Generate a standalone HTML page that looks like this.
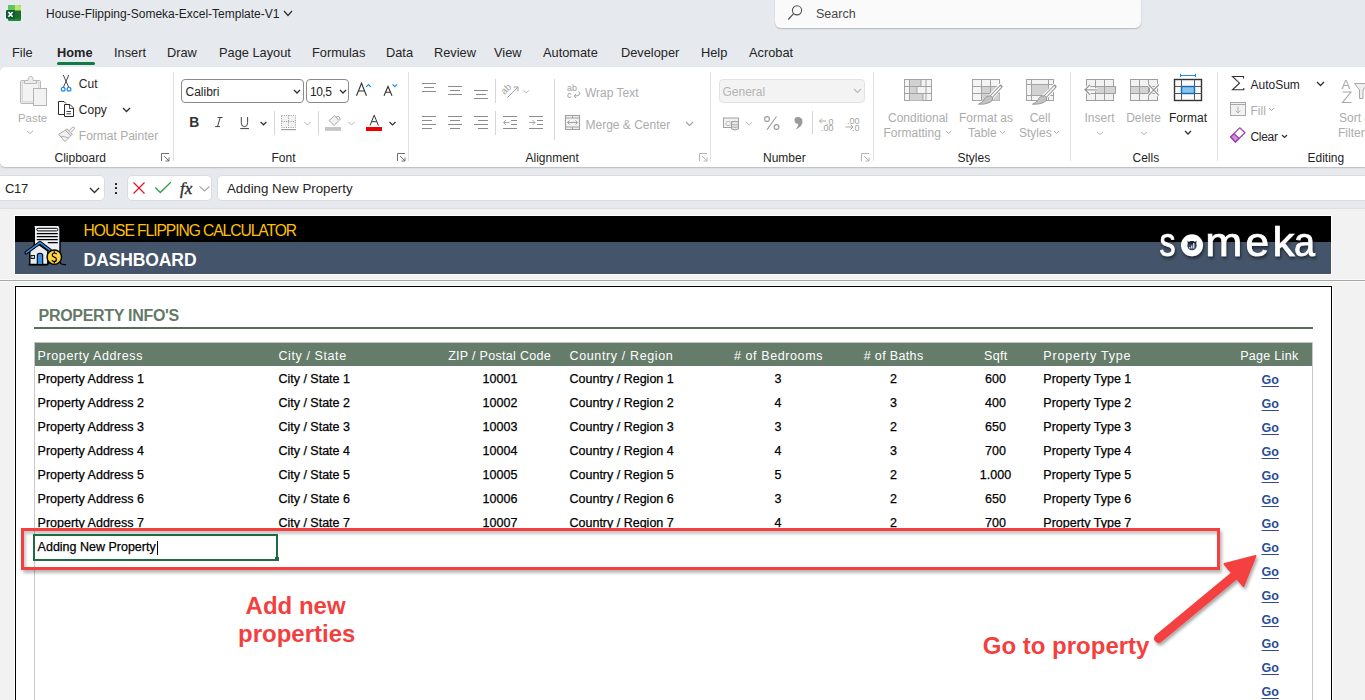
<!DOCTYPE html>
<html><head><meta charset="utf-8">
<style>
*{margin:0;padding:0;box-sizing:border-box}
html,body{width:1365px;height:700px;overflow:hidden;background:#f0f0f0;font-family:"Liberation Sans",sans-serif;color:#222;position:relative}
.t{position:absolute;white-space:nowrap;line-height:1}
.r{position:absolute}
svg.r{overflow:visible}
</style></head><body>
<div class="r" style="left:0px;top:0px;width:1365px;height:208px;background:#e6e9ed;"></div>
<div class="r" style="left:775px;top:-6px;width:366px;height:34px;background:#fafafa;border-radius:6px;box-shadow:0 1px 1.5px rgba(0,0,0,.22)"></div>
<svg class="r" style="left:786px;top:4px;" width="18" height="18" viewBox="0 0 18 18"><circle cx="11" cy="6.3" r="4.6" fill="none" stroke="#505050" stroke-width="1.1"/><path d="M7.6 9.6 L2.3 15.5" stroke="#505050" stroke-width="1.2"/></svg>
<div class="t" style="left:816px;top:8.42px;font-size:12.5px;font-weight:400;color:#474747;">Search</div>
<svg class="r" style="left:0px;top:0px;" width="24" height="24" viewBox="0 0 24 24"><rect x="8" y="5" width="13" height="16" rx="1.8" fill="#1f6b2a"/><path d="M8 10.5 V6.8 Q8 5 9.8 5 H14.5 V10.5 Z" fill="#5fc65b"/><path d="M14.5 5 H19.2 Q21 5 21 6.8 V10.5 H14.5 Z" fill="#b8e76b"/><path d="M8 18.5 H21 V19.2 Q21 21 19.2 21 H9.8 Q8 21 8 19.2 Z" fill="#1a8a3c"/><rect x="6" y="10" width="9" height="8.7" rx="1.3" fill="#0e5a31"/><path d="M8.4 12 L12.6 16.7 M12.6 12 L8.4 16.7" stroke="#fff" stroke-width="1.6"/></svg>
<div class="t" style="left:46px;top:7.84px;font-size:12px;font-weight:400;color:#1f1f1f;">House-Flipping-Someka-Excel-Template-V1</div>
<svg class="r" style="left:283px;top:10px;" width="10" height="7" viewBox="0 0 10 7"><path d="M1 1 L5.0 5.5 L9 1" fill="none" stroke="#303030" stroke-width="1.2"/></svg>
<div class="t" style="left:12px;top:47.16px;font-size:12.8px;font-weight:400;color:#242424;">File</div>
<div class="t" style="left:57px;top:47.16px;font-size:12.8px;font-weight:700;color:#242424;">Home</div>
<div class="t" style="left:114px;top:47.16px;font-size:12.8px;font-weight:400;color:#242424;">Insert</div>
<div class="t" style="left:167px;top:47.16px;font-size:12.8px;font-weight:400;color:#242424;">Draw</div>
<div class="t" style="left:219px;top:47.16px;font-size:12.8px;font-weight:400;color:#242424;">Page Layout</div>
<div class="t" style="left:312px;top:47.16px;font-size:12.8px;font-weight:400;color:#242424;">Formulas</div>
<div class="t" style="left:386px;top:47.16px;font-size:12.8px;font-weight:400;color:#242424;">Data</div>
<div class="t" style="left:434px;top:47.16px;font-size:12.8px;font-weight:400;color:#242424;">Review</div>
<div class="t" style="left:494px;top:47.16px;font-size:12.8px;font-weight:400;color:#242424;">View</div>
<div class="t" style="left:543px;top:47.16px;font-size:12.8px;font-weight:400;color:#242424;">Automate</div>
<div class="t" style="left:621px;top:47.16px;font-size:12.8px;font-weight:400;color:#242424;">Developer</div>
<div class="t" style="left:701px;top:47.16px;font-size:12.8px;font-weight:400;color:#242424;">Help</div>
<div class="t" style="left:749px;top:47.16px;font-size:12.8px;font-weight:400;color:#242424;">Acrobat</div>
<div class="r" style="left:57px;top:62px;width:38px;height:3px;background:#107c41;border-radius:2px"></div>
<div class="r" style="left:0px;top:67px;width:1365px;height:100px;background:#ffffff;border-radius:5px 0 0 5px;box-shadow:0 1px 1.5px rgba(0,0,0,.2)"></div>
<div class="r" style="left:173px;top:72px;width:1px;height:89px;background:#e1e1e1;"></div>
<div class="r" style="left:408px;top:72px;width:1px;height:89px;background:#e1e1e1;"></div>
<div class="r" style="left:710px;top:72px;width:1px;height:89px;background:#e1e1e1;"></div>
<div class="r" style="left:873px;top:72px;width:1px;height:89px;background:#e1e1e1;"></div>
<div class="r" style="left:1070px;top:72px;width:1px;height:89px;background:#e1e1e1;"></div>
<div class="r" style="left:1217px;top:72px;width:1px;height:89px;background:#e1e1e1;"></div>
<div class="t" style="left:54.5px;top:151.84px;font-size:12px;font-weight:400;color:#242424;">Clipboard</div>
<div class="t" style="left:271.5px;top:151.84px;font-size:12px;font-weight:400;color:#242424;">Font</div>
<div class="t" style="left:525.5px;top:151.84px;font-size:12px;font-weight:400;color:#242424;">Alignment</div>
<div class="t" style="left:763px;top:151.84px;font-size:12px;font-weight:400;color:#242424;">Number</div>
<div class="t" style="left:957.5px;top:151.84px;font-size:12px;font-weight:400;color:#242424;">Styles</div>
<div class="t" style="left:1132.5px;top:151.84px;font-size:12px;font-weight:400;color:#242424;">Cells</div>
<div class="t" style="left:1307.5px;top:151.84px;font-size:12px;font-weight:400;color:#242424;">Editing</div>
<svg class="r" style="left:161px;top:153px;" width="9" height="9" viewBox="0 0 9 9"><path d="M0.5 8 V0.5 H8" fill="none" stroke="#6e6e6e" stroke-width="1"/><path d="M3 3 L8 8 M8 4.5 V8 H4.5" fill="none" stroke="#6e6e6e" stroke-width="1"/></svg>
<svg class="r" style="left:397px;top:153px;" width="9" height="9" viewBox="0 0 9 9"><path d="M0.5 8 V0.5 H8" fill="none" stroke="#6e6e6e" stroke-width="1"/><path d="M3 3 L8 8 M8 4.5 V8 H4.5" fill="none" stroke="#6e6e6e" stroke-width="1"/></svg>
<svg class="r" style="left:699px;top:153px;" width="9" height="9" viewBox="0 0 9 9"><path d="M0.5 8 V0.5 H8" fill="none" stroke="#b4b4b4" stroke-width="1"/><path d="M3 3 L8 8 M8 4.5 V8 H4.5" fill="none" stroke="#b4b4b4" stroke-width="1"/></svg>
<svg class="r" style="left:861px;top:153px;" width="9" height="9" viewBox="0 0 9 9"><path d="M0.5 8 V0.5 H8" fill="none" stroke="#b4b4b4" stroke-width="1"/><path d="M3 3 L8 8 M8 4.5 V8 H4.5" fill="none" stroke="#b4b4b4" stroke-width="1"/></svg>
<div class="t" style="left:18px;top:112.85px;font-size:11.4px;font-weight:400;color:#acacac;">Paste</div>
<svg class="r" style="left:26px;top:130px;" width="8" height="5" viewBox="0 0 8 5"><path d="M1 1 L4.0 3.5 L7 1" fill="none" stroke="#b0b0b0" stroke-width="1"/></svg>
<div class="t" style="left:78.8px;top:77.84px;font-size:12px;font-weight:400;color:#242424;">Cut</div>
<div class="t" style="left:78.8px;top:104.34px;font-size:12px;font-weight:400;color:#242424;">Copy</div>
<svg class="r" style="left:121.5px;top:106.5px;" width="9" height="6" viewBox="0 0 9 6"><path d="M1 1 L4.5 4.5 L8 1" fill="none" stroke="#303030" stroke-width="1.3"/></svg>
<div class="t" style="left:78.8px;top:130.34px;font-size:12px;font-weight:400;color:#acacac;">Format Painter</div>
<div class="r" style="left:181px;top:79px;width:123px;height:24px;background:#fff;border:1px solid #8a8a8a;border-radius:4px"></div>
<div class="t" style="left:185.5px;top:86.34px;font-size:12px;font-weight:400;color:#242424;">Calibri</div>
<svg class="r" style="left:292.5px;top:88.5px;" width="8" height="5.5" viewBox="0 0 8 5.5"><path d="M1 1 L4.0 4.0 L7 1" fill="none" stroke="#303030" stroke-width="1.3"/></svg>
<div class="r" style="left:306px;top:79px;width:43px;height:24px;background:#fff;border:1px solid #8a8a8a;border-radius:4px"></div>
<div class="t" style="left:310px;top:86.34px;font-size:12px;font-weight:400;color:#242424;letter-spacing:-0.5px;">10,5</div>
<svg class="r" style="left:338.5px;top:88.5px;" width="8" height="5.5" viewBox="0 0 8 5.5"><path d="M1 1 L4.0 4.0 L7 1" fill="none" stroke="#303030" stroke-width="1.3"/></svg>
<div class="t" style="left:585px;top:86.84px;font-size:12px;font-weight:400;color:#acacac;">Wrap Text</div>
<div class="t" style="left:585.5px;top:118.84px;font-size:12px;font-weight:400;color:#acacac;">Merge &amp; Center</div>
<svg class="r" style="left:685px;top:121px;" width="9" height="6" viewBox="0 0 9 6"><path d="M1 1 L4.5 4.5 L8 1" fill="none" stroke="#a0a0a0" stroke-width="1.1"/></svg>
<div class="r" style="left:719px;top:79px;width:146px;height:24px;background:#f3f3f3;border:1px solid #e3e3e3;border-radius:4px"></div>
<div class="t" style="left:722.5px;top:86.34px;font-size:12px;font-weight:400;color:#b4b4b4;">General</div>
<svg class="r" style="left:853px;top:88px;" width="9" height="6" viewBox="0 0 9 6"><path d="M1 1 L4.5 4.5 L8 1" fill="none" stroke="#b8b8b8" stroke-width="1.1"/></svg>
<div class="t" style="left:718px;width:400px;text-align:center;top:112.34px;font-size:12px;font-weight:400;color:#acacac;">Conditional</div>
<div class="t" style="left:883.5px;top:127.14px;font-size:12px;font-weight:400;color:#acacac;">Formatting</div>
<div class="t" style="left:786px;width:400px;text-align:center;top:112.34px;font-size:12px;font-weight:400;color:#acacac;">Format as</div>
<div class="t" style="left:968px;top:127.14px;font-size:12px;font-weight:400;color:#acacac;">Table</div>
<div class="t" style="left:840px;width:400px;text-align:center;top:112.34px;font-size:12px;font-weight:400;color:#acacac;">Cell</div>
<div class="t" style="left:1019px;top:127.14px;font-size:12px;font-weight:400;color:#acacac;">Styles</div>
<svg class="r" style="left:945px;top:130px;" width="7" height="5" viewBox="0 0 7 5"><path d="M1 1 L3.5 3.5 L6 1" fill="none" stroke="#b0b0b0" stroke-width="1"/></svg>
<svg class="r" style="left:998.5px;top:130px;" width="7" height="5" viewBox="0 0 7 5"><path d="M1 1 L3.5 3.5 L6 1" fill="none" stroke="#b0b0b0" stroke-width="1"/></svg>
<svg class="r" style="left:1052.5px;top:130px;" width="7" height="5" viewBox="0 0 7 5"><path d="M1 1 L3.5 3.5 L6 1" fill="none" stroke="#b0b0b0" stroke-width="1"/></svg>
<div class="t" style="left:899.5px;width:400px;text-align:center;top:112.34px;font-size:12px;font-weight:400;color:#acacac;">Insert</div>
<div class="t" style="left:943.5px;width:400px;text-align:center;top:112.34px;font-size:12px;font-weight:400;color:#acacac;">Delete</div>
<div class="t" style="left:988px;width:400px;text-align:center;top:112.34px;font-size:12px;font-weight:400;color:#242424;">Format</div>
<svg class="r" style="left:1095.5px;top:131px;" width="8" height="5" viewBox="0 0 8 5"><path d="M1 1 L4.0 3.5 L7 1" fill="none" stroke="#b0b0b0" stroke-width="1"/></svg>
<svg class="r" style="left:1140px;top:131px;" width="8" height="5" viewBox="0 0 8 5"><path d="M1 1 L4.0 3.5 L7 1" fill="none" stroke="#b0b0b0" stroke-width="1"/></svg>
<svg class="r" style="left:1184px;top:129.5px;" width="8" height="5.5" viewBox="0 0 8 5.5"><path d="M1 1 L4.0 4.0 L7 1" fill="none" stroke="#303030" stroke-width="1.3"/></svg>
<div class="t" style="left:1250.5px;top:79.34px;font-size:12px;font-weight:400;color:#242424;">AutoSum</div>
<svg class="r" style="left:1315.5px;top:81px;" width="9" height="6" viewBox="0 0 9 6"><path d="M1 1 L4.5 4.5 L8 1" fill="none" stroke="#303030" stroke-width="1.3"/></svg>
<div class="t" style="left:1250.5px;top:105.34px;font-size:12px;font-weight:400;color:#acacac;">Fill</div>
<svg class="r" style="left:1268px;top:107px;" width="7" height="5" viewBox="0 0 7 5"><path d="M1 1 L3.5 3.5 L6 1" fill="none" stroke="#b0b0b0" stroke-width="1"/></svg>
<div class="t" style="left:1250.5px;top:130.84px;font-size:12px;font-weight:400;color:#242424;letter-spacing:-0.3px;">Clear</div>
<svg class="r" style="left:1281px;top:133.5px;" width="7" height="5" viewBox="0 0 7 5"><path d="M1 1 L3.5 3.5 L6 1" fill="none" stroke="#303030" stroke-width="1.2"/></svg>
<div class="t" style="left:1339px;top:111.84px;font-size:12px;font-weight:400;color:#acacac;">Sort &amp;</div>
<div class="t" style="left:1338px;top:127.34px;font-size:12px;font-weight:400;color:#acacac;">Filter</div>
<div class="r" style="left:-5px;top:175px;width:110px;height:26px;background:#fff;border:1px solid #dcdcdc;border-radius:5px"></div>
<div class="t" style="left:5px;top:182.00px;font-size:13px;font-weight:400;color:#242424;letter-spacing:-0.3px;">C17</div>
<svg class="r" style="left:89px;top:187px;" width="11" height="7" viewBox="0 0 11 7"><path d="M1 1 L5.5 5.5 L10 1" fill="none" stroke="#303030" stroke-width="1.3"/></svg>
<div class="r" style="left:115px;top:182.8px;width:2px;height:2px;background:#1a1a1a;border-radius:0.5px"></div>
<div class="r" style="left:115px;top:187.3px;width:2px;height:2px;background:#1a1a1a;border-radius:0.5px"></div>
<div class="r" style="left:115px;top:191.6px;width:2px;height:2px;background:#1a1a1a;border-radius:0.5px"></div>
<div class="r" style="left:126.5px;top:175px;width:85px;height:26px;background:#fff;border:1px solid #dcdcdc;border-radius:5px"></div>
<div class="r" style="left:216.5px;top:175px;width:1160px;height:26px;background:#fff;border:1px solid #dcdcdc;border-radius:5px"></div>
<div class="t" style="left:227px;top:181.74px;font-size:13.3px;font-weight:400;color:#242424;">Adding New Property</div>
<svg style="position:absolute;left:0;top:0;overflow:visible" width="1365" height="700" viewBox="0 0 1365 700"><rect x="20.5" y="80.5" width="20" height="23" rx="1.2" fill="#e9e9e9" stroke="#b9b9b9" stroke-width="1"/><rect x="22.5" y="82.5" width="16" height="19" fill="#f3f3f3" stroke="#d6d6d6" stroke-width="0.8"/><path d="M24.5 83.5 V80.5 H28 Q28 76.3 30.6 76.3 Q33.2 76.3 33.2 80.5 H36.5 V83.5 Z" fill="#ececec" stroke="#b9b9b9" stroke-width="1"/><rect x="33.5" y="88.5" width="13" height="17" fill="#f2f2f2" stroke="#b3b3b3" stroke-width="1"/><path d="M63.3 75 L68.8 87.5 M68.8 75 L63.3 87.5" stroke="#333" stroke-width="0.9" fill="none"/><circle cx="63.2" cy="89.3" r="1.9" fill="none" stroke="#1e88e5" stroke-width="1.2"/><circle cx="69" cy="89.3" r="1.9" fill="none" stroke="#1e88e5" stroke-width="1.2"/><path d="M64.5 114.5 H58.5 V101.5 H64 L66 103.5" fill="none" stroke="#2b2b2b" stroke-width="1"/><path d="M64.5 104.5 H70 L73.5 108 V116.5 H64.5 Z" fill="#fff" stroke="#2b2b2b" stroke-width="1"/><path d="M69.5 104.5 V108.5 H73.5" fill="none" stroke="#2b2b2b" stroke-width="0.9"/><path d="M66.5 111.5 H71 M66.5 113.8 H71" stroke="#2b2b2b" stroke-width="0.9"/><path d="M65.3 130.2 L58.6 134.3 L65 141.6 L70.8 135.7 Z" fill="#f1f1f1" stroke="#a9a9a9" stroke-width="1" stroke-linejoin="round"/><path d="M60.3 136.2 Q64.5 136.3 68.6 137.9" fill="none" stroke="#a9a9a9" stroke-width="0.9"/><path d="M65.3 130.2 L66.8 128.7 L72.3 134.2 L70.8 135.7 Z" fill="#e6e6e6" stroke="#a9a9a9" stroke-width="1" stroke-linejoin="round"/><path d="M68.9 130.8 L72.2 127.6 Q73.4 126.6 74.2 127.5 Q75 128.5 73.9 129.5 L70.6 132.5" fill="#f4f4f4" stroke="#a9a9a9" stroke-width="1"/><text x="189.3" y="127" font-family="Liberation Sans" font-weight="700" font-size="13.8" fill="#333">B</text><path d="M217.6 117.5 H222.6 M215.2 126.6 H220 M220.2 117.5 L217.5 126.6" stroke="#444" stroke-width="1" fill="none"/><path d="M241.3 117 V122.8 Q241.3 126.7 244.5 126.7 Q247.6 126.7 247.6 122.8 V117" fill="none" stroke="#444" stroke-width="1"/><path d="M240.2 128.6 H249" stroke="#444" stroke-width="1"/><path d="M260.6 122 L263.5 124.8 L266.4 122" fill="none" stroke="#333" stroke-width="1.2"/><line x1="274.5" y1="111" x2="274.5" y2="135" stroke="#d6d6d6"/><line x1="318.5" y1="111" x2="318.5" y2="135" stroke="#d6d6d6"/><rect x="281.5" y="115.5" width="14" height="12" fill="#f2f2f2" stroke="#9a9a9a" stroke-width="1" stroke-dasharray="1 1.3"/><path d="M288.5 115.5 V127.5 M281.5 121.5 H295.5" stroke="#9a9a9a" stroke-width="1" stroke-dasharray="1 1.3"/><rect x="281" y="129" width="15" height="1.2" fill="#a0a0a0"/><path d="M304.5 122 L307.5 125 L310.5 122" fill="none" stroke="#b5b5b5" stroke-width="1"/><path d="M329 120.5 L334.5 115.5 L339 120.5 L334 125.5 Z" fill="#f0f0f0" stroke="#a8a8a8" stroke-width="1"/><path d="M336 117 Q340 115 340 120" fill="none" stroke="#a8a8a8" stroke-width="1"/><rect x="325" y="127" width="16" height="3.8" fill="#c4c4c4"/><path d="M348.5 122 L351.5 125 L354.5 122" fill="none" stroke="#b5b5b5" stroke-width="1"/><path d="M370 125.5 L374.2 115.2 L378.4 125.5 M371.6 121.7 H376.8" fill="none" stroke="#333" stroke-width="1"/><rect x="366" y="127" width="16" height="4" fill="#ee0000"/><path d="M389.5 122 L392.5 125 L395.5 122" fill="none" stroke="#333" stroke-width="1.2"/><path d="M356.5 95.8 L361.5 83.3 L366.5 95.8 M358.4 91 H364.6" fill="none" stroke="#333" stroke-width="1.1"/><path d="M366.2 86.8 L368.5 84.5 L370.8 86.8" fill="none" stroke="#1e88e5" stroke-width="1.1"/><path d="M384 95.8 L388 86.5 L392 95.8 M385.5 92.3 H390.5" fill="none" stroke="#333" stroke-width="1.1"/><path d="M392.5 84.3 L394.8 86.6 L397.1 84.3" fill="none" stroke="#1e88e5" stroke-width="1.1"/><path d="M422 83.5 H436" stroke="#8c8c8c" stroke-width="1"/><path d="M424 87.5 H434" stroke="#8c8c8c" stroke-width="1"/><path d="M422 91.5 H436" stroke="#8c8c8c" stroke-width="1"/><path d="M448 86.5 H462" stroke="#8c8c8c" stroke-width="1"/><path d="M450 90.5 H460" stroke="#8c8c8c" stroke-width="1"/><path d="M448 94.5 H462" stroke="#8c8c8c" stroke-width="1"/><path d="M474 90.5 H488" stroke="#8c8c8c" stroke-width="1"/><path d="M476 94.5 H486" stroke="#8c8c8c" stroke-width="1"/><path d="M474 98.5 H488" stroke="#8c8c8c" stroke-width="1"/><path d="M422 116.5 H436" stroke="#8c8c8c" stroke-width="1"/><path d="M422 120.5 H432" stroke="#8c8c8c" stroke-width="1"/><path d="M422 124.5 H436" stroke="#8c8c8c" stroke-width="1"/><path d="M422 128.5 H432" stroke="#8c8c8c" stroke-width="1"/><path d="M448 116.5 H462" stroke="#8c8c8c" stroke-width="1"/><path d="M450 120.5 H460" stroke="#8c8c8c" stroke-width="1"/><path d="M448 124.5 H462" stroke="#8c8c8c" stroke-width="1"/><path d="M450 128.5 H460" stroke="#8c8c8c" stroke-width="1"/><path d="M474 116.5 H488" stroke="#8c8c8c" stroke-width="1"/><path d="M478 120.5 H488" stroke="#8c8c8c" stroke-width="1"/><path d="M474 124.5 H488" stroke="#8c8c8c" stroke-width="1"/><path d="M478 128.5 H488" stroke="#8c8c8c" stroke-width="1"/><path d="M503 116.5 H517" stroke="#8c8c8c" stroke-width="1"/><path d="M511 120.5 H517" stroke="#8c8c8c" stroke-width="1"/><path d="M511 124.5 H517" stroke="#8c8c8c" stroke-width="1"/><path d="M503 128.5 H517" stroke="#8c8c8c" stroke-width="1"/><path d="M529 116.5 H543" stroke="#8c8c8c" stroke-width="1"/><path d="M537 120.5 H543" stroke="#8c8c8c" stroke-width="1"/><path d="M537 124.5 H543" stroke="#8c8c8c" stroke-width="1"/><path d="M529 128.5 H543" stroke="#8c8c8c" stroke-width="1"/><path d="M509.5 122.5 H503.5 M506 120 L503.5 122.5 L506 125" fill="none" stroke="#a8a8a8" stroke-width="1"/><path d="M529 122.5 H535 M532.5 120 L535 122.5 L532.5 125" fill="none" stroke="#a8a8a8" stroke-width="1"/><line x1="495.5" y1="79" x2="495.5" y2="103" stroke="#d6d6d6"/><line x1="495.5" y1="111" x2="495.5" y2="135" stroke="#d6d6d6"/><line x1="554.5" y1="79" x2="554.5" y2="140" stroke="#d6d6d6"/><text x="0" y="0" font-family="Liberation Sans" font-size="9.5" fill="#a0a0a0" transform="translate(504.5,95) rotate(-45)">ab</text><path d="M507.5 97.5 L518 87 M513.5 87 H518 V91.5" fill="none" stroke="#a0a0a0" stroke-width="1"/><path d="M523.5 90.3 L526.3 93 L529 90.3" fill="none" stroke="#b5b5b5" stroke-width="1"/><text x="567" y="90.5" font-family="Liberation Sans" font-size="9" fill="#a0a0a0">ab</text><text x="567" y="98" font-family="Liberation Sans" font-size="9" fill="#a0a0a0">c</text><path d="M578.5 91.5 Q581 93 579 95 Q578 96 574 96 M576 94 L574 96 L576 98" fill="none" stroke="#a0a0a0" stroke-width="1"/><rect x="565.5" y="115.5" width="14" height="14" fill="#f3f3f3" stroke="#a0a0a0" stroke-width="1.1"/><path d="M565.5 118 H579.5 M565.5 127 H579.5 M572.5 115.5 V118 M572.5 127 V129.5" stroke="#a0a0a0" stroke-width="1"/><path d="M567.5 122.5 H577.5 M569.5 120.5 L567.5 122.5 L569.5 124.5 M575.5 120.5 L577.5 122.5 L575.5 124.5" fill="none" stroke="#a0a0a0" stroke-width="1"/><rect x="723.5" y="118" width="15" height="9.5" fill="#f3f3f3" stroke="#a0a0a0" stroke-width="1"/><text x="725.3" y="125.6" font-family="Liberation Sans" font-size="7" fill="#a0a0a0">CR</text><path d="M731.5 122 Q735 120.5 738.5 122 V129 Q735 131 731.5 129 Z" fill="#e8e8e8" stroke="#a0a0a0" stroke-width="1"/><path d="M731.5 124.3 Q735 126 738.5 124.3 M731.5 126.7 Q735 128.4 738.5 126.7" fill="none" stroke="#a0a0a0" stroke-width="0.8"/><path d="M746.3 122.3 L749.2 125 L752.1 122.3" fill="none" stroke="#b5b5b5" stroke-width="1"/><circle cx="767" cy="119" r="2.4" fill="none" stroke="#9a9a9a" stroke-width="1.1"/><circle cx="776.5" cy="127" r="2.4" fill="none" stroke="#9a9a9a" stroke-width="1.1"/><path d="M776.5 116.5 L767 129.8" stroke="#9a9a9a" stroke-width="1.1"/><path d="M797.5 117 Q802.5 117 802.5 121.5 Q802.5 126.5 795.5 129.8 Q799 125.5 797.8 123.8 Q794.5 123.5 794.5 120.3 Q794.5 117 797.5 117 Z" fill="#9a9a9a"/><line x1="812.5" y1="111" x2="812.5" y2="134.5" stroke="#d6d6d6"/><text x="826" y="124.5" font-family="Liberation Sans" font-size="9" fill="#a0a0a0">.0</text><path d="M826 121 H819.5 M822 118.5 L819.5 121 L822 123.5" fill="none" stroke="#a0a0a0" stroke-width="0.9"/><text x="821" y="130.5" font-family="Liberation Sans" font-size="9" fill="#a0a0a0">.00</text><text x="847" y="124" font-family="Liberation Sans" font-size="9" fill="#a0a0a0">.00</text><path d="M845.5 127 H853 M850.5 124.5 L853 127 L850.5 129.5" fill="none" stroke="#a0a0a0" stroke-width="0.9"/><text x="852" y="130.5" font-family="Liberation Sans" font-size="9" fill="#a0a0a0">.0</text><rect x="904.5" y="79.5" width="27" height="21" fill="#f4f4f4" stroke="#a3a3a3" stroke-width="1"/><rect x="909.5" y="80" width="11.5" height="6.5" fill="#d2d2d2"/><rect x="909.5" y="87" width="7.5" height="6.5" fill="#d2d2d2"/><rect x="909.5" y="94" width="13.5" height="6.5" fill="#d2d2d2"/><path d="M904.5 86.5 H931.5 M904.5 93.5 H931.5 M909.5 79.5 V100.5 M926 79.5 V100.5 M921 79.5 V86.5 M917 86.5 V93.5 M923 93.5 V100.5" stroke="#a3a3a3" stroke-width="1" fill="none"/><rect x="972.5" y="79.5" width="27" height="21" fill="#f4f4f4" stroke="#a3a3a3" stroke-width="1"/><rect x="981.5" y="86.5" width="18" height="14" fill="#d2d2d2"/><path d="M972.5 86.5 H999.5 M972.5 93.5 H999.5 M981.5 79.5 V100.5 M990.5 79.5 V100.5" stroke="#a3a3a3" stroke-width="1" fill="none"/><rect x="1026.5" y="79.5" width="27" height="21" fill="#f4f4f4" stroke="#a3a3a3" stroke-width="1"/><rect x="1031.5" y="84.5" width="17" height="11" fill="#d2d2d2" stroke="#a3a3a3" stroke-width="1"/><path d="M1026.5 84.5 H1053.5 M1026.5 95.5 H1053.5 M1031.5 79.5 V100.5 M1048.5 79.5 V100.5" stroke="#a3a3a3" stroke-width="1" fill="none"/><g transform="translate(0,0)"><path d="M990.5 97.5 L1000.8 86.5" stroke="#fff" stroke-width="5.5" stroke-linecap="round"/><path d="M990.5 97.5 L1000.8 86.5" stroke="#9a9a9a" stroke-width="3.6" stroke-linecap="round"/><path d="M991.3 96.6 L1000.3 87" stroke="#fafafa" stroke-width="1.6" stroke-linecap="round"/><path d="M986.8 96.5 Q990.5 94.5 992.8 97.6 Q993.2 101 989 102.8 Q984 104.6 978.5 104.2 Q982 102.6 983.6 100.6 Q984.6 98 986.8 96.5 Z" fill="#c4c4c4" stroke="#9a9a9a" stroke-width="1"/></g><g transform="translate(54,0)"><path d="M990.5 97.5 L1000.8 86.5" stroke="#fff" stroke-width="5.5" stroke-linecap="round"/><path d="M990.5 97.5 L1000.8 86.5" stroke="#9a9a9a" stroke-width="3.6" stroke-linecap="round"/><path d="M991.3 96.6 L1000.3 87" stroke="#fafafa" stroke-width="1.6" stroke-linecap="round"/><path d="M986.8 96.5 Q990.5 94.5 992.8 97.6 Q993.2 101 989 102.8 Q984 104.6 978.5 104.2 Q982 102.6 983.6 100.6 Q984.6 98 986.8 96.5 Z" fill="#c4c4c4" stroke="#9a9a9a" stroke-width="1"/></g><rect x="1086.5" y="79.5" width="27" height="21" fill="#f2f2f2" stroke="#9e9e9e" stroke-width="1"/><rect x="1095.5" y="86.5" width="20" height="7" fill="#d3d3d3" stroke="#9e9e9e" stroke-width="1"/><path d="M1086.5 86.5 H1113.5 M1086.5 93.5 H1113.5 M1095.5 79.5 V100.5 M1104.5 79.5 V100.5" stroke="#9e9e9e" stroke-width="1" fill="none"/><path d="M1097.5 89.8 H1085 M1090 84.8 L1085 89.8 L1090 94.8" fill="none" stroke="#ffffff" stroke-width="3"/><path d="M1097.5 89.8 H1085 M1090 84.8 L1085 89.8 L1090 94.8" fill="none" stroke="#9c9c9c" stroke-width="1.3"/><rect x="1130.5" y="79.5" width="27" height="21" fill="#f2f2f2" stroke="#9e9e9e" stroke-width="1"/><rect x="1130.5" y="86.5" width="19" height="7" fill="#d3d3d3" stroke="#9e9e9e" stroke-width="1"/><path d="M1130.5 86.5 H1157.5 M1130.5 93.5 H1157.5 M1139.5 79.5 V100.5 M1148.5 79.5 V100.5" stroke="#9e9e9e" stroke-width="1" fill="none"/><path d="M1148.5 84.5 L1159 95.5 M1159 84.5 L1148.5 95.5" stroke="#ffffff" stroke-width="3"/><path d="M1148.5 84.5 L1159 95.5 M1159 84.5 L1148.5 95.5" stroke="#9c9c9c" stroke-width="1.3"/><rect x="1174.5" y="79.5" width="27" height="21" fill="#fafafa" stroke="#333" stroke-width="1.4"/><path d="M1174.5 86.5 H1201.5 M1174.5 93.5 H1201.5 M1181.5 79.5 V100.5 M1194.5 79.5 V100.5" stroke="#555" stroke-width="1" fill="none"/><rect x="1181.5" y="86.5" width="13" height="7" fill="#8cc3ec" stroke="#0f6cbd" stroke-width="1.4"/><path d="M1180.5 75.5 H1195.5 M1180.5 73.8 V77.2 M1195.5 73.8 V77.2" stroke="#1e88e5" stroke-width="1"/><path d="M1243.5 78.5 V76.5 H1232.5 L1239.5 83.2 L1232.5 89.8 H1243.8 V88" fill="none" stroke="#333" stroke-width="1.1"/><rect x="1230.5" y="102.5" width="15" height="13" fill="#f2f2f2" stroke="#a8a8a8" stroke-width="1"/><path d="M1230.5 104.5 H1245.5" stroke="#a8a8a8"/><path d="M1238 106.5 V113 M1235.5 110.5 L1238 113 L1240.5 110.5" fill="none" stroke="#a8a8a8" stroke-width="0.9"/><path d="M1239.7 127.8 L1245 132.8 L1235.4 142 L1230.6 137 Z" fill="#fff" stroke="#9b3fae" stroke-width="1.2" stroke-linejoin="round"/><path d="M1230.6 137 L1234.3 133.6 L1239 138.5 L1235.4 142 Z" fill="#cf8fd8" stroke="#9b3fae" stroke-width="1.2" stroke-linejoin="round"/><text x="1341.5" y="88.5" font-family="Liberation Sans" font-size="13" fill="#a8a8a8">A</text><path d="M1342.5 92 H1351 L1342.5 102.5 H1351.5" fill="none" stroke="#a8a8a8" stroke-width="1.1"/><path d="M1354.5 83.5 H1368 L1363 90 V98.5 H1359.5 V90 Z" fill="#f0f0f0" stroke="#a8a8a8" stroke-width="1"/><path d="M133.5 182.5 L144.5 193.5 M144.5 182.5 L133.5 193.5" stroke="#e81123" stroke-width="1.2"/><path d="M155.3 187.5 L160.3 192.5 L170.8 182.3" fill="none" stroke="#2ea043" stroke-width="1.3"/><text x="180" y="193.5" font-family="Liberation Serif" font-style="italic" font-size="17" fill="#2a2a2a" stroke="#2a2a2a" stroke-width="0.35">fx</text><path d="M199.5 186.3 L204.5 191 L209.5 186.3" fill="none" stroke="#a0a0a0" stroke-width="1.1"/></svg>
<div class="r" style="left:0px;top:208px;width:1365px;height:1px;background:#dcdfe3;"></div>
<div class="r" style="left:0px;top:209px;width:1365px;height:491px;background:#f2f2f2;"></div>
<div class="r" style="left:0px;top:279px;width:1365px;height:3px;background:#f9f9f9;"></div>
<div class="r" style="left:0px;top:280px;width:1365px;height:1px;background:#a6a6a6;"></div>
<div class="r" style="left:14px;top:215px;width:1318px;height:60px;background:#ffffff;"></div>
<div class="r" style="left:15px;top:216px;width:1316px;height:58px;background:#44546a;"></div>
<div class="r" style="left:15px;top:216px;width:1316px;height:26px;background:#000000;"></div>
<div class="t" style="left:83.6px;top:222.79px;font-size:15.6px;font-weight:400;color:#ffc000;letter-spacing:-1.05px;">HOUSE FLIPPING CALCULATOR</div>
<div class="t" style="left:83.6px;top:251.59px;font-size:17.5px;font-weight:700;color:#ffffff;letter-spacing:-0.1px;">DASHBOARD</div>
<svg style="position:absolute;left:0;top:0;overflow:visible" width="1365" height="700" viewBox="0 0 1365 700"><path d="M32.5 225.2 Q34.3 225.8 34.3 228.5 V262 H60 V228 Q60 225.2 57.5 225.2 Z" fill="#eef0f4" stroke="#000" stroke-width="1.4" stroke-linejoin="round"/><path d="M60 262 Q60.5 264.5 64 264.6 L66 264.6" fill="none" stroke="#000" stroke-width="1.2"/><rect x="36.8" y="228.3" width="21" height="2.6" rx="1.3" fill="#fff" stroke="#000" stroke-width="1"/><path d="M36.8 233.6 H57.8 M36.8 236.6 H57.8 M36.8 239.6 H57.8 M47.8 242.6 H57.8" stroke="#000" stroke-width="1.3"/><path d="M29.8 251 V264.5 H47.8 V251 L38.8 244.5 Z" fill="#e9ecef" stroke="#000" stroke-width="1.4" stroke-linejoin="round"/><path d="M26.3 252.6 L40 242.6 L50.5 250.6" fill="none" stroke="#000" stroke-width="3.6" stroke-linejoin="round" stroke-linecap="round"/><path d="M26.3 252.6 L40 242.6 L50.5 250.6" fill="none" stroke="#3b8de0" stroke-width="1.5" stroke-linejoin="round" stroke-linecap="round"/><path d="M37.3 264.5 V255.5 Q37.3 253.3 40 253.3 Q42.7 253.3 42.7 255.5 V264.5 Z" fill="#3b8de0" stroke="#000" stroke-width="1.1"/><rect x="31" y="255.5" width="3.5" height="3" fill="#fff" stroke="#000" stroke-width="0.9"/><rect x="32" y="256.5" width="1.5" height="1" fill="#3b8de0"/><path d="M28.5 264.8 H47" stroke="#000" stroke-width="1.3"/><circle cx="54.3" cy="257.2" r="7.2" fill="#fdd43b" stroke="#000" stroke-width="1.4"/><path d="M56.3 253.7 Q55.7 253 54.3 253 Q52.3 253 52.3 255 Q52.3 256.7 54.3 257.2 Q56.4 257.7 56.4 259.4 Q56.4 261.4 54.3 261.4 Q52.8 261.4 52.2 260.6 M54.3 251.5 V253 M54.3 261.4 V263" fill="none" stroke="#000" stroke-width="1.2" stroke-linecap="round"/><path d="M47 264.8 Q49 262.5 50.5 263" fill="none" stroke="#000" stroke-width="1"/><defs><filter id="lsh" x="-20%" y="-20%" width="140%" height="160%"><feDropShadow dx="1" dy="2.2" stdDeviation="1.6" flood-color="#000" flood-opacity=".55"/></filter></defs><g filter="url(#lsh)" fill="#fff" stroke="#fff" stroke-width="0.7" font-family="Liberation Sans" font-size="40"><text x="1159.5" y="255.6" transform="translate(1159.5,0) scale(0.8,1) translate(-1159.5,0)">s</text><circle cx="1192" cy="245.3" r="11" stroke="none"/><text x="1205.2" y="255.6" textLength="37" lengthAdjust="spacingAndGlyphs">m</text><text x="1245.6" y="255.6" textLength="23.5" lengthAdjust="spacingAndGlyphs">e</text><text x="1272.6" y="255.6" textLength="22" lengthAdjust="spacingAndGlyphs">k</text><text x="1294" y="255.6" textLength="21" lengthAdjust="spacingAndGlyphs">a</text></g><circle cx="1192" cy="245.6" r="4.7" fill="#33425a"/><path d="M1187.3 240.5 L1189 242 Q1192 240 1195 242 L1196.7 240.5 L1196 244 H1188 Z" fill="#1a2230"/><path d="M1189.8 248.6 V247 M1191.8 248.6 V245.5 M1193.8 248.6 V243" stroke="#fff" stroke-width="1.1"/></svg>
<div class="r" style="left:14px;top:285px;width:1319px;height:430px;background:#ffffff;"></div>
<div class="r" style="left:15px;top:286px;width:1317px;height:430px;background:#ffffff;border:1px solid #000"></div>
<div class="t" style="left:38.6px;top:307.96px;font-size:16px;font-weight:700;color:#637a67;letter-spacing:-0.3px;">PROPERTY INFO'S</div>
<div class="r" style="left:34px;top:327px;width:1279px;height:2px;background:#566e5b;"></div>
<div class="r" style="left:34px;top:342px;width:1279px;height:1px;background:#c0c0c0;"></div>
<div class="r" style="left:35px;top:343px;width:1277px;height:23px;background:#657c6a;"></div>
<div class="r" style="left:34px;top:342px;width:1px;height:358px;background:#c8c8c8;"></div>
<div class="r" style="left:1312px;top:342px;width:1px;height:358px;background:#c8c8c8;"></div>
<div class="t" style="left:37.6px;top:350.42px;font-size:12.5px;font-weight:400;color:#fff;letter-spacing:0.6px;">Property Address</div>
<div class="t" style="left:278.4px;top:350.42px;font-size:12.5px;font-weight:400;color:#fff;letter-spacing:0.6px;">City / State</div>
<div class="t" style="right:814px;top:350.42px;font-size:12.5px;font-weight:400;color:#fff;letter-spacing:0.3px;">ZIP / Postal Code</div>
<div class="t" style="left:569.5px;top:350.42px;font-size:12.5px;font-weight:400;color:#fff;letter-spacing:0.63px;">Country / Region</div>
<div class="t" style="right:542px;top:350.42px;font-size:12.5px;font-weight:400;color:#fff;letter-spacing:0.6px;"># of Bedrooms</div>
<div class="t" style="right:441.5px;top:350.42px;font-size:12.5px;font-weight:400;color:#fff;letter-spacing:0.35px;"># of Baths</div>
<div class="t" style="right:357.5px;top:350.42px;font-size:12.5px;font-weight:400;color:#fff;letter-spacing:0.3px;">Sqft</div>
<div class="t" style="left:1043.3px;top:350.42px;font-size:12.5px;font-weight:400;color:#fff;letter-spacing:0.8px;">Property Type</div>
<div class="t" style="right:66.5px;top:350.42px;font-size:12.5px;font-weight:400;color:#fff;letter-spacing:0.3px;">Page Link</div>
<div class="t" style="left:37.6px;top:373.42px;font-size:12.5px;font-weight:400;color:#000;-webkit-text-stroke:0.25px #000;">Property Address 1</div>
<div class="t" style="left:278.4px;top:373.42px;font-size:12.5px;font-weight:400;color:#000;-webkit-text-stroke:0.25px #000;">City / State 1</div>
<div class="t" style="left:300px;width:400px;text-align:center;top:373.42px;font-size:12.5px;font-weight:400;color:#000;-webkit-text-stroke:0.25px #000;">10001</div>
<div class="t" style="left:569.5px;top:373.42px;font-size:12.5px;font-weight:400;color:#000;-webkit-text-stroke:0.25px #000;">Country / Region 1</div>
<div class="t" style="left:578px;width:400px;text-align:center;top:373.42px;font-size:12.5px;font-weight:400;color:#000;-webkit-text-stroke:0.25px #000;">3</div>
<div class="t" style="left:693.5px;width:400px;text-align:center;top:373.42px;font-size:12.5px;font-weight:400;color:#000;-webkit-text-stroke:0.25px #000;">2</div>
<div class="t" style="left:795.5px;width:400px;text-align:center;top:373.42px;font-size:12.5px;font-weight:400;color:#000;-webkit-text-stroke:0.25px #000;">600</div>
<div class="t" style="left:1043.3px;top:373.42px;font-size:12.5px;font-weight:400;color:#000;-webkit-text-stroke:0.25px #000;">Property Type 1</div>
<div class="t" style="left:37.6px;top:397.42px;font-size:12.5px;font-weight:400;color:#000;-webkit-text-stroke:0.25px #000;">Property Address 2</div>
<div class="t" style="left:278.4px;top:397.42px;font-size:12.5px;font-weight:400;color:#000;-webkit-text-stroke:0.25px #000;">City / State 2</div>
<div class="t" style="left:300px;width:400px;text-align:center;top:397.42px;font-size:12.5px;font-weight:400;color:#000;-webkit-text-stroke:0.25px #000;">10002</div>
<div class="t" style="left:569.5px;top:397.42px;font-size:12.5px;font-weight:400;color:#000;-webkit-text-stroke:0.25px #000;">Country / Region 2</div>
<div class="t" style="left:578px;width:400px;text-align:center;top:397.42px;font-size:12.5px;font-weight:400;color:#000;-webkit-text-stroke:0.25px #000;">4</div>
<div class="t" style="left:693.5px;width:400px;text-align:center;top:397.42px;font-size:12.5px;font-weight:400;color:#000;-webkit-text-stroke:0.25px #000;">3</div>
<div class="t" style="left:795.5px;width:400px;text-align:center;top:397.42px;font-size:12.5px;font-weight:400;color:#000;-webkit-text-stroke:0.25px #000;">400</div>
<div class="t" style="left:1043.3px;top:397.42px;font-size:12.5px;font-weight:400;color:#000;-webkit-text-stroke:0.25px #000;">Property Type 2</div>
<div class="t" style="left:37.6px;top:421.42px;font-size:12.5px;font-weight:400;color:#000;-webkit-text-stroke:0.25px #000;">Property Address 3</div>
<div class="t" style="left:278.4px;top:421.42px;font-size:12.5px;font-weight:400;color:#000;-webkit-text-stroke:0.25px #000;">City / State 3</div>
<div class="t" style="left:300px;width:400px;text-align:center;top:421.42px;font-size:12.5px;font-weight:400;color:#000;-webkit-text-stroke:0.25px #000;">10003</div>
<div class="t" style="left:569.5px;top:421.42px;font-size:12.5px;font-weight:400;color:#000;-webkit-text-stroke:0.25px #000;">Country / Region 3</div>
<div class="t" style="left:578px;width:400px;text-align:center;top:421.42px;font-size:12.5px;font-weight:400;color:#000;-webkit-text-stroke:0.25px #000;">3</div>
<div class="t" style="left:693.5px;width:400px;text-align:center;top:421.42px;font-size:12.5px;font-weight:400;color:#000;-webkit-text-stroke:0.25px #000;">2</div>
<div class="t" style="left:795.5px;width:400px;text-align:center;top:421.42px;font-size:12.5px;font-weight:400;color:#000;-webkit-text-stroke:0.25px #000;">650</div>
<div class="t" style="left:1043.3px;top:421.42px;font-size:12.5px;font-weight:400;color:#000;-webkit-text-stroke:0.25px #000;">Property Type 3</div>
<div class="t" style="left:37.6px;top:445.42px;font-size:12.5px;font-weight:400;color:#000;-webkit-text-stroke:0.25px #000;">Property Address 4</div>
<div class="t" style="left:278.4px;top:445.42px;font-size:12.5px;font-weight:400;color:#000;-webkit-text-stroke:0.25px #000;">City / State 4</div>
<div class="t" style="left:300px;width:400px;text-align:center;top:445.42px;font-size:12.5px;font-weight:400;color:#000;-webkit-text-stroke:0.25px #000;">10004</div>
<div class="t" style="left:569.5px;top:445.42px;font-size:12.5px;font-weight:400;color:#000;-webkit-text-stroke:0.25px #000;">Country / Region 4</div>
<div class="t" style="left:578px;width:400px;text-align:center;top:445.42px;font-size:12.5px;font-weight:400;color:#000;-webkit-text-stroke:0.25px #000;">4</div>
<div class="t" style="left:693.5px;width:400px;text-align:center;top:445.42px;font-size:12.5px;font-weight:400;color:#000;-webkit-text-stroke:0.25px #000;">3</div>
<div class="t" style="left:795.5px;width:400px;text-align:center;top:445.42px;font-size:12.5px;font-weight:400;color:#000;-webkit-text-stroke:0.25px #000;">700</div>
<div class="t" style="left:1043.3px;top:445.42px;font-size:12.5px;font-weight:400;color:#000;-webkit-text-stroke:0.25px #000;">Property Type 4</div>
<div class="t" style="left:37.6px;top:469.42px;font-size:12.5px;font-weight:400;color:#000;-webkit-text-stroke:0.25px #000;">Property Address 5</div>
<div class="t" style="left:278.4px;top:469.42px;font-size:12.5px;font-weight:400;color:#000;-webkit-text-stroke:0.25px #000;">City / State 5</div>
<div class="t" style="left:300px;width:400px;text-align:center;top:469.42px;font-size:12.5px;font-weight:400;color:#000;-webkit-text-stroke:0.25px #000;">10005</div>
<div class="t" style="left:569.5px;top:469.42px;font-size:12.5px;font-weight:400;color:#000;-webkit-text-stroke:0.25px #000;">Country / Region 5</div>
<div class="t" style="left:578px;width:400px;text-align:center;top:469.42px;font-size:12.5px;font-weight:400;color:#000;-webkit-text-stroke:0.25px #000;">5</div>
<div class="t" style="left:693.5px;width:400px;text-align:center;top:469.42px;font-size:12.5px;font-weight:400;color:#000;-webkit-text-stroke:0.25px #000;">2</div>
<div class="t" style="left:795.5px;width:400px;text-align:center;top:469.42px;font-size:12.5px;font-weight:400;color:#000;-webkit-text-stroke:0.25px #000;">1.000</div>
<div class="t" style="left:1043.3px;top:469.42px;font-size:12.5px;font-weight:400;color:#000;-webkit-text-stroke:0.25px #000;">Property Type 5</div>
<div class="t" style="left:37.6px;top:493.42px;font-size:12.5px;font-weight:400;color:#000;-webkit-text-stroke:0.25px #000;">Property Address 6</div>
<div class="t" style="left:278.4px;top:493.42px;font-size:12.5px;font-weight:400;color:#000;-webkit-text-stroke:0.25px #000;">City / State 6</div>
<div class="t" style="left:300px;width:400px;text-align:center;top:493.42px;font-size:12.5px;font-weight:400;color:#000;-webkit-text-stroke:0.25px #000;">10006</div>
<div class="t" style="left:569.5px;top:493.42px;font-size:12.5px;font-weight:400;color:#000;-webkit-text-stroke:0.25px #000;">Country / Region 6</div>
<div class="t" style="left:578px;width:400px;text-align:center;top:493.42px;font-size:12.5px;font-weight:400;color:#000;-webkit-text-stroke:0.25px #000;">3</div>
<div class="t" style="left:693.5px;width:400px;text-align:center;top:493.42px;font-size:12.5px;font-weight:400;color:#000;-webkit-text-stroke:0.25px #000;">2</div>
<div class="t" style="left:795.5px;width:400px;text-align:center;top:493.42px;font-size:12.5px;font-weight:400;color:#000;-webkit-text-stroke:0.25px #000;">650</div>
<div class="t" style="left:1043.3px;top:493.42px;font-size:12.5px;font-weight:400;color:#000;-webkit-text-stroke:0.25px #000;">Property Type 6</div>
<div class="t" style="left:37.6px;top:517.42px;font-size:12.5px;font-weight:400;color:#000;-webkit-text-stroke:0.25px #000;">Property Address 7</div>
<div class="t" style="left:278.4px;top:517.42px;font-size:12.5px;font-weight:400;color:#000;-webkit-text-stroke:0.25px #000;">City / State 7</div>
<div class="t" style="left:300px;width:400px;text-align:center;top:517.42px;font-size:12.5px;font-weight:400;color:#000;-webkit-text-stroke:0.25px #000;">10007</div>
<div class="t" style="left:569.5px;top:517.42px;font-size:12.5px;font-weight:400;color:#000;-webkit-text-stroke:0.25px #000;">Country / Region 7</div>
<div class="t" style="left:578px;width:400px;text-align:center;top:517.42px;font-size:12.5px;font-weight:400;color:#000;-webkit-text-stroke:0.25px #000;">4</div>
<div class="t" style="left:693.5px;width:400px;text-align:center;top:517.42px;font-size:12.5px;font-weight:400;color:#000;-webkit-text-stroke:0.25px #000;">2</div>
<div class="t" style="left:795.5px;width:400px;text-align:center;top:517.42px;font-size:12.5px;font-weight:400;color:#000;-webkit-text-stroke:0.25px #000;">700</div>
<div class="t" style="left:1043.3px;top:517.42px;font-size:12.5px;font-weight:400;color:#000;-webkit-text-stroke:0.25px #000;">Property Type 7</div>
<div class="t" style="left:1261.5px;top:374.42px;font-size:12.5px;font-weight:700;color:#2b4c9b;text-decoration:underline;text-underline-offset:1.5px;text-decoration-thickness:1px">Go</div>
<div class="t" style="left:1261.5px;top:398.42px;font-size:12.5px;font-weight:700;color:#2b4c9b;text-decoration:underline;text-underline-offset:1.5px;text-decoration-thickness:1px">Go</div>
<div class="t" style="left:1261.5px;top:422.42px;font-size:12.5px;font-weight:700;color:#2b4c9b;text-decoration:underline;text-underline-offset:1.5px;text-decoration-thickness:1px">Go</div>
<div class="t" style="left:1261.5px;top:446.42px;font-size:12.5px;font-weight:700;color:#2b4c9b;text-decoration:underline;text-underline-offset:1.5px;text-decoration-thickness:1px">Go</div>
<div class="t" style="left:1261.5px;top:470.42px;font-size:12.5px;font-weight:700;color:#2b4c9b;text-decoration:underline;text-underline-offset:1.5px;text-decoration-thickness:1px">Go</div>
<div class="t" style="left:1261.5px;top:494.42px;font-size:12.5px;font-weight:700;color:#2b4c9b;text-decoration:underline;text-underline-offset:1.5px;text-decoration-thickness:1px">Go</div>
<div class="t" style="left:1261.5px;top:518.42px;font-size:12.5px;font-weight:700;color:#2b4c9b;text-decoration:underline;text-underline-offset:1.5px;text-decoration-thickness:1px">Go</div>
<div class="t" style="left:1261.5px;top:542.42px;font-size:12.5px;font-weight:700;color:#2b4c9b;text-decoration:underline;text-underline-offset:1.5px;text-decoration-thickness:1px">Go</div>
<div class="t" style="left:1261.5px;top:566.42px;font-size:12.5px;font-weight:700;color:#2b4c9b;text-decoration:underline;text-underline-offset:1.5px;text-decoration-thickness:1px">Go</div>
<div class="t" style="left:1261.5px;top:590.42px;font-size:12.5px;font-weight:700;color:#2b4c9b;text-decoration:underline;text-underline-offset:1.5px;text-decoration-thickness:1px">Go</div>
<div class="t" style="left:1261.5px;top:614.42px;font-size:12.5px;font-weight:700;color:#2b4c9b;text-decoration:underline;text-underline-offset:1.5px;text-decoration-thickness:1px">Go</div>
<div class="t" style="left:1261.5px;top:638.42px;font-size:12.5px;font-weight:700;color:#2b4c9b;text-decoration:underline;text-underline-offset:1.5px;text-decoration-thickness:1px">Go</div>
<div class="t" style="left:1261.5px;top:662.42px;font-size:12.5px;font-weight:700;color:#2b4c9b;text-decoration:underline;text-underline-offset:1.5px;text-decoration-thickness:1px">Go</div>
<div class="t" style="left:1261.5px;top:686.42px;font-size:12.5px;font-weight:700;color:#2b4c9b;text-decoration:underline;text-underline-offset:1.5px;text-decoration-thickness:1px">Go</div>
<div class="r" style="left:21px;top:528px;width:1199px;height:42px;background:transparent;border:3.3px solid #f43f3f;box-shadow:2px 3px 3px rgba(0,0,0,.28), inset 2px 3px 3px rgba(0,0,0,.22)"></div>
<div class="r" style="left:33px;top:534px;width:245px;height:26.5px;background:transparent;border:2px solid #1e6b41"></div>
<div class="r" style="left:274.5px;top:557px;width:4px;height:4px;background:#1e6b41;"></div>
<div class="t" style="left:37.6px;top:541.42px;font-size:12.5px;font-weight:400;color:#000;-webkit-text-stroke:0.25px #000;">Adding New Property</div>
<div class="r" style="left:157px;top:541px;width:1px;height:14px;background:#000;"></div>
<div class="t" style="left:245.6px;top:593.98px;font-size:24px;font-weight:700;color:#f43f3f;">Add new</div>
<div class="t" style="left:238px;top:621.68px;font-size:24px;font-weight:700;color:#f43f3f;">properties</div>
<div class="t" style="left:982.8px;top:634.18px;font-size:24px;font-weight:700;color:#f43f3f;">Go to property</div>
<svg class="r" style="left:1150px;top:550px;" width="115" height="100" viewBox="0 0 115 100"><g filter="url(#sh)"><path d="M8.5 88.5 L84 26" stroke="#f43f3f" stroke-width="9" stroke-linecap="round"/><path d="M105.5 6 L74.5 14 L93.5 36 Z" fill="#f43f3f" stroke="#f43f3f" stroke-width="2" stroke-linejoin="round"/></g><defs><filter id="sh" x="-20%" y="-20%" width="150%" height="150%"><feDropShadow dx="1.5" dy="2.5" stdDeviation="1.8" flood-opacity=".35"/></filter></defs></svg>
</body></html>
